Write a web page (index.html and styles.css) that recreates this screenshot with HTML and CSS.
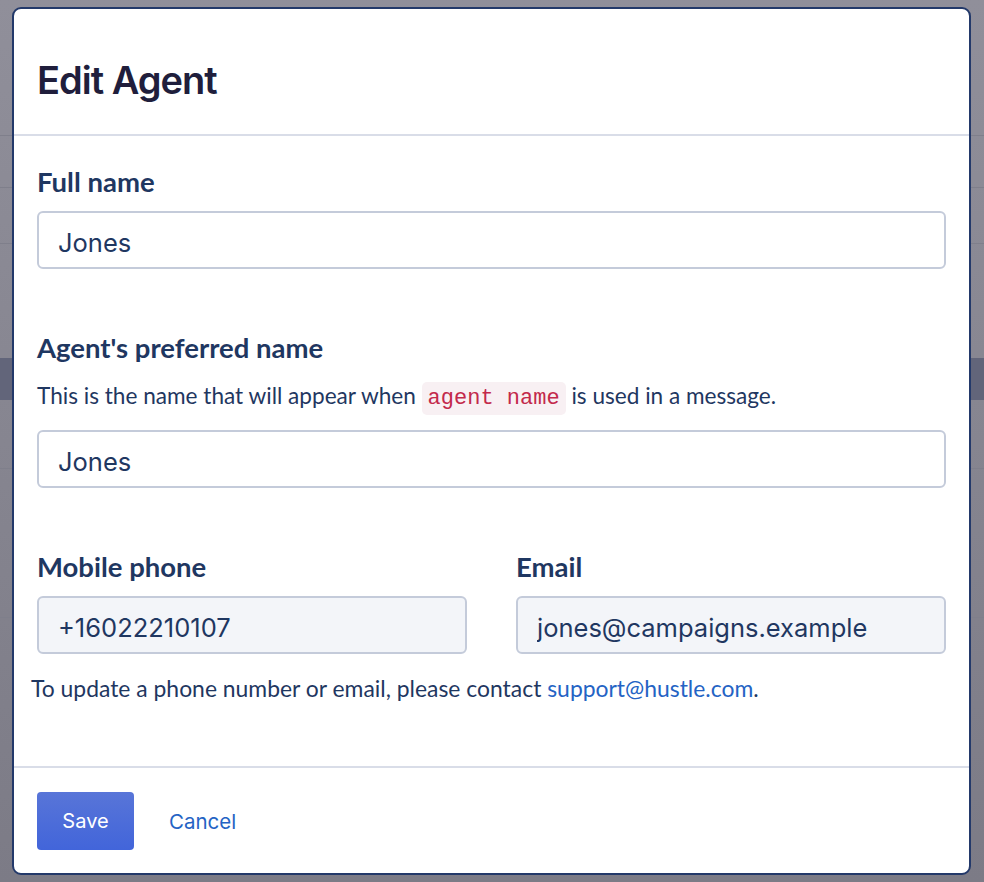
FILE: index.html
```html
<!DOCTYPE html>
<html lang="en">
<head>
    <meta charset="UTF-8">
    <meta name="viewport" content="width=device-width, initial-scale=1.0">
    <title>Edit Agent</title>
    <link rel="stylesheet" href="styles.css">
</head>
<body>
    <div class="modal">
        <div class="modal-header">
            <h1>Edit Agent</h1>
        </div>
        <form class="modal-body">
            <div class="form-group">
                <label for="fullName">Full name</label>
                <input type="text" id="fullName" value="Jones">
            </div>
            <div class="form-group">
                <label for="preferredName">Agent's preferred name</label>
                <p class="hint">This is the name that will appear when <code>agent name</code> is used in a message.</p>
                <input type="text" id="preferredName" value="Jones">
            </div>
            <div class="contact-group">
                <div class="form-row">
                    <div class="form-group">
                        <label for="phone">Mobile phone</label>
                        <input type="text" id="phone" value="+16022210107" disabled>
                    </div>
                    <div class="form-group">
                        <label for="email">Email</label>
                        <input type="text" id="email" value="jones@campaigns.example" disabled>
                    </div>
                </div>
                <p class="info-text">To update a phone number or email, please contact <a href="#">support@hustle.com</a>.</p>
            </div>
        </form>
        <div class="modal-footer">
            <button type="button" class="save-btn">Save</button>
            <button type="button" class="cancel-btn">Cancel</button>
        </div>
    </div>
</body>
</html>
```

FILE: styles.css
```css
:root {
    --navy: #1f3761;
    --title-color: #201e3c;
    --border-color: #c4cbda;
    --divider: #d9dde8;
    --link-color: #2463c4;
}

* {
    margin: 0;
    padding: 0;
    box-sizing: border-box;
}

body {
    font-family: Lato, 'Noto Sans', sans-serif;
    color: var(--navy);
    height: 100vh;
    padding: 7px 12px;
    /* the page behind the overlay */
    background:
        linear-gradient(#7f7f8b, #7f7f8b) 0 135px / 100% 1px no-repeat,
        linear-gradient(#7f7f8b, #7f7f8b) 0 187px / 100% 1px no-repeat,
        linear-gradient(#7f7f8b, #7f7f8b) 0 243px / 100% 1px no-repeat,
        linear-gradient(#62657a, #62657a) 0 358px / 100% 42px no-repeat,
        linear-gradient(#7f7f8b, #7f7f8b) 0 468px / 100% 1px no-repeat,
        linear-gradient(#7f7f8b, #7f7f8b) 0 617px / 100% 1px no-repeat,
        linear-gradient(#908f9a, #7c7b86);
}

.modal {
    width: 959px;
    background-color: #ffffff;
    border: 2px solid #23396a;
    border-radius: 9px;
    overflow: hidden;
}

.modal-header {
    padding: 49px 23px 32px;
    border-bottom: 2px solid var(--divider);
}

.modal-header h1 {
    font-family: Inter, sans-serif;
    font-size: 38px;
    font-weight: 600;
    line-height: 44px;
    letter-spacing: -1px;
    color: var(--title-color);
}

.modal-body {
    padding: 30px 23px 64px;
    display: flex;
    flex-direction: column;
    gap: 63px;
}

.form-group {
    display: flex;
    flex-direction: column;
}

.form-group label {
    font-size: 27.5px;
    font-weight: 700;
    line-height: 32px;
    margin-bottom: 13px;
}

.form-group input {
    height: 58px;
    padding: 5px 19px 0;
    border: 2px solid var(--border-color);
    border-radius: 6px;
    background-color: #ffffff;
    font-family: Inter, sans-serif;
    font-size: 25.5px;
    color: var(--navy);
    width: 100%;
}

.form-group input:disabled {
    background-color: #f3f5f9;
}

.hint {
    font-size: 22.6px;
    line-height: 28px;
    margin: 5px 0 20px;
}

.hint code {
    font-family: 'Liberation Mono', monospace;
    font-size: 22px;
    line-height: 1;
    color: #c3294b;
    background-color: #f8f0f3;
    border-radius: 5px;
    padding: 4px 6px;
}

.form-row {
    display: grid;
    grid-template-columns: 1fr 1fr;
    gap: 49px;
}

.info-text {
    font-size: 22.9px;
    line-height: 28px;
    margin: 20px 0 0 -6px;
}

.info-text a {
    color: var(--link-color);
    text-decoration: none;
}

.modal-footer {
    border-top: 2px solid var(--divider);
    padding: 24px 23px 23px;
    display: flex;
    align-items: center;
    gap: 35px;
}

.save-btn {
    width: 97px;
    height: 58px;
    border: none;
    border-radius: 4px;
    background: linear-gradient(#5875d8, #4265da);
    color: #ffffff;
    font-family: Inter, sans-serif;
    font-size: 20px;
    cursor: pointer;
}

.cancel-btn {
    border: none;
    background: none;
    color: var(--link-color);
    font-family: Inter, sans-serif;
    font-size: 20.5px;
    cursor: pointer;
}
```
